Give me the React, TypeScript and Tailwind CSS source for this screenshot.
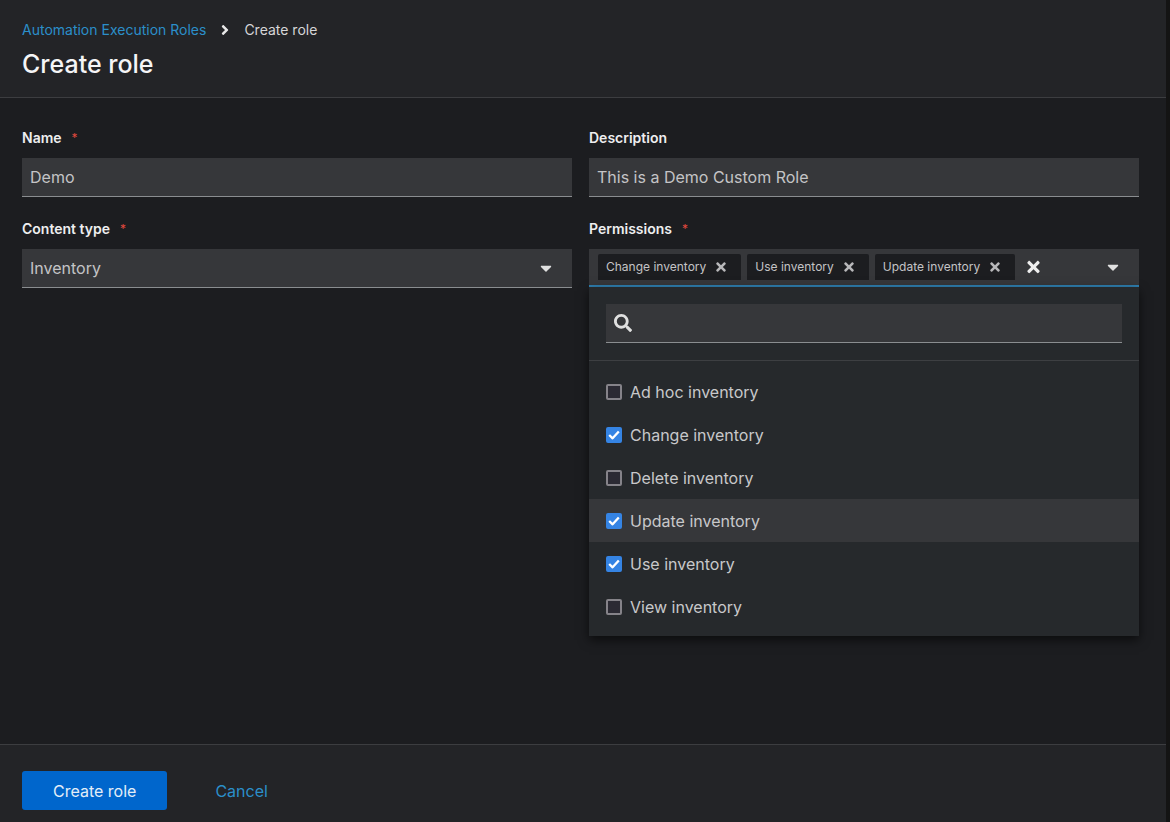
import React, { useState } from "react";
import { FaAngleRight, FaCaretDown, FaSearch, FaTimes } from "react-icons/fa";

const PERMISSIONS = [
  "Ad hoc inventory",
  "Change inventory",
  "Delete inventory",
  "Update inventory",
  "Use inventory",
  "View inventory",
];

const inputClass =
  "block h-[39px] w-full appearance-none rounded-none border-b border-[#8a8d90] bg-[#36373a] px-2 text-base text-[#c4c4c6] outline-none";

const Label: React.FC<{ htmlFor: string; text: string; required?: boolean }> = ({
  htmlFor,
  text,
  required,
}) => (
  <label
    htmlFor={htmlFor}
    className="mb-2 flex h-6 items-center gap-[10px] text-sm font-semibold text-[#eeeeef]"
  >
    {text}
    {required && <span className="text-xs font-normal text-[#e0483e]">*</span>}
  </label>
);

const Checkbox: React.FC<{ id: string; checked: boolean; onChange: () => void }> = ({
  id,
  checked,
  onChange,
}) => (
  <span className="relative h-4 w-4 shrink-0">
    <input
      id={id}
      type="checkbox"
      checked={checked}
      onChange={onChange}
      className="block h-4 w-4 appearance-none rounded-xs border-2 border-[#858389] bg-[#2b2a33] checked:border-[#3584e4] checked:bg-[#3584e4]"
    />
    {checked && (
      <svg
        viewBox="0 0 16 16"
        className="pointer-events-none absolute inset-0 h-4 w-4"
        fill="none"
        stroke="#fff"
        strokeWidth="2.3"
        strokeLinejoin="round"
      >
        <path d="M3.2 8 L6.6 11.3 L12.8 4.4" />
      </svg>
    )}
  </span>
);

const App: React.FC = () => {
  const [name, setName] = useState("Demo");
  const [description, setDescription] = useState("This is a Demo Custom Role");
  const [open, setOpen] = useState(true);
  const [query, setQuery] = useState("");
  const [selected, setSelected] = useState([
    "Change inventory",
    "Use inventory",
    "Update inventory",
  ]);

  const toggle = (item: string) =>
    setSelected((prev) =>
      prev.includes(item) ? prev.filter((p) => p !== item) : [...prev, item]
    );

  const visible = PERMISSIONS.filter((p) =>
    p.toLowerCase().includes(query.toLowerCase())
  );

  return (
    <div className="min-h-screen bg-[#141414] pr-1 font-['Inter','Liberation_Sans',sans-serif]">
      <div className="flex min-h-screen flex-col bg-[#1c1d20]">
        <header className="border-b border-[#3c3d40] bg-[#232427] px-[22px] pt-[18px] pb-[15px]">
          <nav aria-label="Breadcrumb" className="flex h-6 items-center gap-[15px] text-sm">
            <a href="#roles" className="text-[#2b8fca]">
              Automation Execution Roles
            </a>
            <FaAngleRight className="h-4 w-2 text-[#e8e8e8]" />
            <span className="text-[#d6d6d8]">Create role</span>
          </nav>
          <h1 className="mt-1 text-[25px] leading-9 font-medium text-[#f5f5f6]">
            Create role
          </h1>
        </header>

        <main className="grid flex-1 grid-cols-2 content-start gap-x-[17px] gap-y-5 py-7 pr-[27px] pl-[22px]">
          <div>
            <Label htmlFor="name" text="Name" required />
            <input
              id="name"
              className={inputClass}
              value={name}
              onChange={(e) => setName(e.target.value)}
            />
          </div>

          <div>
            <Label htmlFor="description" text="Description" />
            <input
              id="description"
              className={inputClass}
              value={description}
              onChange={(e) => setDescription(e.target.value)}
            />
          </div>

          <div>
            <Label htmlFor="content-type" text="Content type" required />
            <div className="relative">
              <select id="content-type" defaultValue="Inventory" className={inputClass}>
                <option>Inventory</option>
              </select>
              <FaCaretDown className="pointer-events-none absolute top-[10px] right-[17px] h-[18px] w-[18px] text-[#e0e0e0]" />
            </div>
          </div>

          <div>
            <Label htmlFor="permissions" text="Permissions" required />
            <div className="relative">
              <div className="flex h-[38px] items-center border-b-2 border-[#2f7fb0] bg-[#36373a] pr-[17px] pl-[9px]">
                <ul className="flex gap-[6px]">
                  {selected.map((item) => (
                    <li
                      key={item}
                      className="flex h-[26px] items-center gap-[10px] rounded-t-xs bg-[#1c1d20] pr-[15px] pl-2 text-xs whitespace-nowrap text-[#c4c4c6]"
                    >
                      {item}
                      <button
                        type="button"
                        aria-label={`Remove ${item}`}
                        onClick={() => toggle(item)}
                      >
                        <FaTimes className="h-[14px] w-[10px] text-[#b8b8ba]" />
                      </button>
                    </li>
                  ))}
                </ul>
                <button
                  type="button"
                  aria-label="Clear all"
                  className="ml-3"
                  onClick={() => setSelected([])}
                >
                  <FaTimes className="h-[18px] w-[13px] text-[#eeeeee]" />
                </button>
                <button
                  id="permissions"
                  type="button"
                  aria-label="Permissions"
                  aria-expanded={open}
                  className="ml-auto"
                  onClick={() => setOpen(!open)}
                >
                  <FaCaretDown className="h-[18px] w-[18px] text-[#e0e0e0]" />
                </button>
              </div>

              {open && (
                <div className="absolute top-full right-0 left-0 bg-[#26292c] shadow-[0_4px_10px_rgba(0,0,0,0.6)]">
                  <div className="border-b border-[#3d3f42] p-[17px]">
                    <div className="flex h-[39px] items-center gap-2 border-b border-[#8a8d90] bg-[#36373a] px-2">
                      <FaSearch className="h-[18px] w-[18px] text-[#e0e0e0]" />
                      <input
                        type="search"
                        aria-label="Search permissions"
                        className="min-w-0 flex-1 bg-transparent text-base text-[#c4c4c6] outline-none"
                        value={query}
                        onChange={(e) => setQuery(e.target.value)}
                      />
                    </div>
                  </div>
                  <ul className="pt-[9px] pb-2">
                    {visible.map((item) => (
                      <li
                        key={item}
                        className={
                          item === "Update inventory" ? "bg-[#36373a]" : "hover:bg-[#36373a]"
                        }
                      >
                        <label
                          htmlFor={item}
                          className="flex h-[43px] items-center gap-2 px-[17px] text-base text-[#c8c8ca]"
                        >
                          <Checkbox
                            id={item}
                            checked={selected.includes(item)}
                            onChange={() => toggle(item)}
                          />
                          {item}
                        </label>
                      </li>
                    ))}
                  </ul>
                </div>
              )}
            </div>
          </div>
        </main>

        <footer className="flex items-center gap-[18px] border-t border-[#3c3d40] bg-[#232427] px-[22px] pt-[26px] pb-3">
          <button
            type="submit"
            className="h-[39px] rounded-[3px] bg-[#0066cc] px-[31px] text-base text-[#e4eef8]"
          >
            Create role
          </button>
          <button type="button" className="h-[39px] px-[30px] text-base text-[#2b8fca]">
            Cancel
          </button>
        </footer>
      </div>
    </div>
  );
};

export default App;
